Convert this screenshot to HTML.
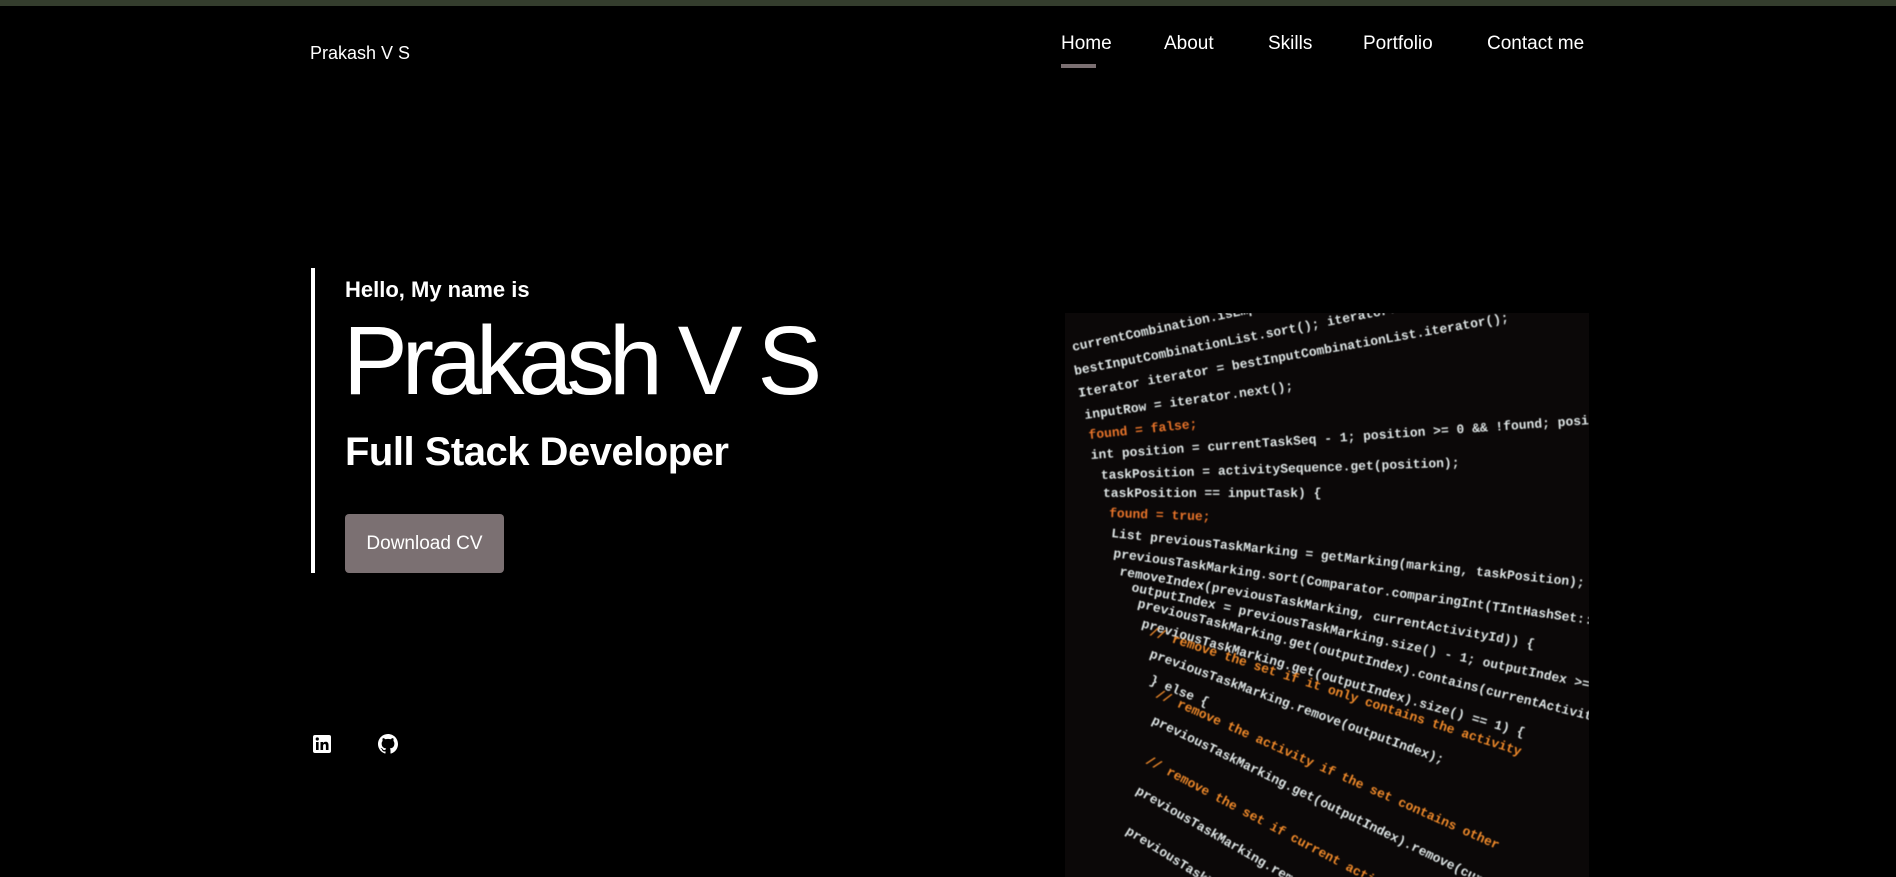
<!DOCTYPE html>
<html><head><meta charset="utf-8"><style>
html,body{margin:0;padding:0;background:#000;overflow:hidden;width:1896px;height:877px;}
body{position:relative;font-family:"Liberation Sans",sans-serif;color:#fff;}
.topbar{position:absolute;left:0;top:0;width:1896px;height:6px;background:#343d2d;}
.brand{position:absolute;left:310px;top:43px;font-size:18px;}
.nav{position:absolute;top:33px;font-size:19px;}
.ul{position:absolute;left:1061px;top:64px;width:35px;height:4px;background:#7b7072;}
.bar{position:absolute;left:311px;top:268px;width:4px;height:305px;background:#fff;}
.hello{position:absolute;left:345px;top:277px;font-size:22px;font-weight:bold;}
.big{position:absolute;left:343px;top:312px;font-size:97px;letter-spacing:-6px;line-height:1;}
.fsd{position:absolute;left:345px;top:432px;font-size:40px;font-weight:bold;letter-spacing:-0.5px;line-height:1;}
.btn{position:absolute;left:345px;top:514px;width:159px;height:59px;background:#7b7072;border-radius:4px;font-size:19px;line-height:59px;text-align:center;}
.img{position:absolute;left:1065px;top:313px;width:524px;height:564px;background:#0b0808;overflow:hidden;}
</style></head><body>
<div class="topbar"></div>
<div class="brand">Prakash V S</div>
<div class="nav" style="left:1061px">Home</div>
<div class="nav" style="left:1164px">About</div>
<div class="nav" style="left:1268px">Skills</div>
<div class="nav" style="left:1363px">Portfolio</div>
<div class="nav" style="left:1487px">Contact me</div>
<div class="ul"></div>
<div class="bar"></div>
<div class="hello">Hello, My name is</div>
<div class="big">Prakash V S</div>
<div class="fsd">Full Stack Developer</div>
<div class="btn">Download CV</div>
<svg style="position:absolute;left:312px;top:734px" width="20" height="20" viewBox="0 0 20 20"><rect x="1" y="1" width="18" height="18" rx="2" fill="#fff"/><rect x="4" y="8" width="2.6" height="8" fill="#000"/><circle cx="5.3" cy="5" r="1.6" fill="#000"/><path d="M8.5 8h2.5v1.2c.5-.9 1.5-1.4 2.7-1.4 2 0 2.8 1.3 2.8 3.4V16h-2.6v-4.3c0-1-.3-1.7-1.2-1.7s-1.600.7-1.6 1.8V16H8.5z" fill="#000"/></svg>
<svg style="position:absolute;left:378px;top:734px" width="20" height="20" viewBox="0 0 16 16"><path fill="#fff" d="M8 0C3.58 0 0 3.58 0 8c0 3.54 2.290 6.53 5.47 7.59.4.07.55-.17.55-.38v-1.33c-2.23.48-2.7-1.07-2.7-1.07-.36-.92-.89-1.17-.89-1.17-.73-.5.06-.49.06-.49.8.06 1.23.83 1.23.83.72 1.22 1.870.87 2.33.66.07-.52.28-.87.5-1.07-1.78-.2-3.640-.89-3.64-3.95 0-.87.31-1.59.82-2.15-.08-.2-.36-1.02.08-2.12 0 0 .67-.21 2.2.82a7.6 7.6 0 0 1 4 0c1.53-1.04 2.2-.82 2.2-.82.44 1.1.16 1.92.08 2.12.51.56.82 1.27.82 2.15 0 3.07-1.87 3.75-3.65 3.95.29.25.54.73.54 1.48v2.2c0 .21.15.46.55.38A8.01 8.01 0 0 0 16 8c0-4.420-3.58-8-8-8z"/></svg>
<div class="img">
<svg width="524" height="564" viewBox="0 0 524 564" style="filter:blur(0.5px);display:block">
<g font-family="Liberation Mono,monospace" font-weight="bold" font-size="13" fill="#dfe6e6">
<text transform="translate(8,38) rotate(-12)">currentCombination.isEmpty()) { <tspan fill="#e8742a">=new</tspan> TIntArrayList(bestInput</text>
<text transform="translate(10,62) rotate(-11)">bestInputCombinationList.sort(); iterator.hasNext()) {</text>
<text transform="translate(14,84) rotate(-10)">Iterator iterator = bestInputCombinationList.iterator();</text>
<text transform="translate(20,106) rotate(-8)">inputRow = iterator.next();</text>
<text transform="translate(24,126) rotate(-6)"><tspan fill="#e8742a">found = false;</tspan></text>
<text transform="translate(26,146) rotate(-4)">int position = currentTaskSeq - 1; position &gt;= 0 &amp;&amp; !found; position--) {</text>
<text transform="translate(36,166) rotate(-2)">taskPosition = activitySequence.get(position);</text>
<text transform="translate(38,184) rotate(0)">taskPosition == inputTask) {</text>
<text transform="translate(44,204) rotate(2)"><tspan fill="#e8742a">found = true;</tspan></text>
<text transform="translate(46,224) rotate(6)">List previousTaskMarking = getMarking(marking, taskPosition);</text>
<text transform="translate(48,244) rotate(8)">previousTaskMarking.sort(Comparator.comparingInt(TIntHashSet::size));</text>
<text transform="translate(54,262) rotate(10)">removeIndex(previousTaskMarking, currentActivityId)) {</text>
<text transform="translate(66,278) rotate(12)">outputIndex = previousTaskMarking.size() - 1; outputIndex &gt;= 0;</text>
<text transform="translate(72,294) rotate(14)">previousTaskMarking.get(outputIndex).contains(currentActivityId)</text>
<text transform="translate(76,314) rotate(16)">previousTaskMarking.get(outputIndex).size() == 1) {</text>
<text transform="translate(84,322) rotate(18)" fill="#f08a2a">// remove the set if it only contains the activity</text>
<text transform="translate(84,344) rotate(20)">previousTaskMarking.remove(outputIndex);</text>
<text transform="translate(84,370) rotate(22)">} else {</text>
<text transform="translate(90,384) rotate(24)" fill="#f08a2a">// remove the activity if the set contains other</text>
<text transform="translate(86,410) rotate(26)">previousTaskMarking.get(outputIndex).remove(current</text>
<text transform="translate(80,450) rotate(28)" fill="#f08a2a">// remove the set if current activity is not</text>
<text transform="translate(70,480) rotate(30)">previousTaskMarking.remove(outputIndex);</text>
<text transform="translate(60,520) rotate(32)">previousTaskMarking.get(outputIndex)</text>
</g>
</svg>
</div>
</body></html>
